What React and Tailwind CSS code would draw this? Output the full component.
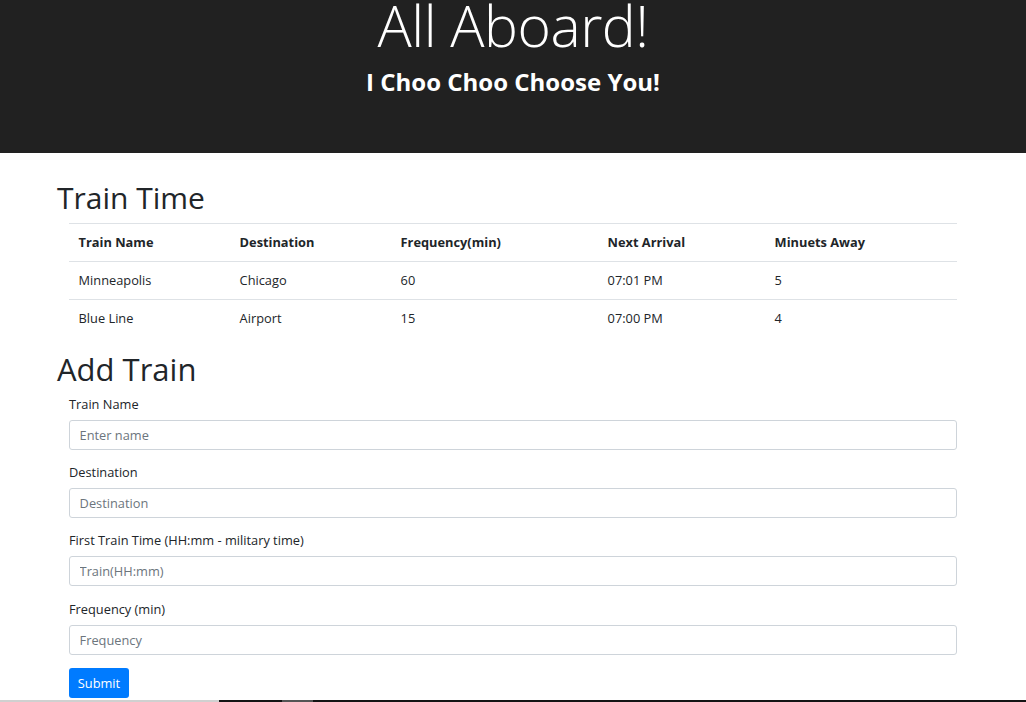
import React from 'react';

const font = { fontFamily: '"Open Sans", "Noto Sans", sans-serif' };

const trains = [
    { name: 'Minneapolis', dest: 'Chicago', freq: '60', next: '07:01 PM', away: '5' },
    { name: 'Blue Line', dest: 'Airport', freq: '15', next: '07:00 PM', away: '4' },
];

const fields = [
    { label: 'Train Name', placeholder: 'Enter name' },
    { label: 'Destination', placeholder: 'Destination' },
    { label: 'First Train Time (HH:mm - military time)', placeholder: 'Train(HH:mm)' },
    { label: 'Frequency (min)', placeholder: 'Frequency' },
];

export default function App() {
    return (
        <div className="min-h-[702px] bg-white text-[#212529]" style={font}>
            {/* Jumbotron */}
            <header className="h-[153px] bg-[#212121] text-white flex flex-col items-center overflow-hidden">
                <h1 className="text-[57px] leading-[50px] font-light tracking-[-0.5px]">All Aboard!</h1>
                <h3 className="text-[24px] leading-[24px] font-bold mt-[20px]">I Choo Choo Choose You!</h3>
            </header>

            <main className="w-[912px] mx-auto mt-[27px]">
                <h1 className="text-[30px] leading-[36px] font-medium mb-[7px]">Train Time</h1>

                <div className="px-[12px]">
                    <table className="w-full table-fixed border-collapse text-[12.8px] mb-[13px]">
                        <thead>
                            <tr className="border-t border-b border-[#dee2e6]">
                                <th className="w-[161px] h-[38px] px-[9.6px] text-left font-bold">Train Name</th>
                                <th className="w-[161px] px-[9.6px] text-left font-bold">Destination</th>
                                <th className="w-[207px] px-[9.6px] text-left font-bold">Frequency(min)</th>
                                <th className="w-[167px] px-[9.6px] text-left font-bold">Next Arrival</th>
                                <th className="px-[9.6px] text-left font-bold">Minuets Away</th>
                            </tr>
                        </thead>
                        <tbody>
                            {trains.map((t, i) => (
                                <tr key={t.name} className={i > 0 ? 'border-t border-[#dee2e6]' : ''}>
                                    <td className="h-[38px] px-[9.6px]">{t.name}</td>
                                    <td className="px-[9.6px]">{t.dest}</td>
                                    <td className="px-[9.6px]">{t.freq}</td>
                                    <td className="px-[9.6px]">{t.next}</td>
                                    <td className="px-[9.6px]">{t.away}</td>
                                </tr>
                            ))}
                        </tbody>
                    </table>
                </div>

                <h1 className="text-[31px] leading-[37px] font-medium mb-[7px]">Add Train</h1>

                <form className="px-[12px] text-[12.8px]" onSubmit={(e) => e.preventDefault()}>
                    {fields.map((f) => (
                        <div key={f.label} className="mb-[13.4px]">
                            <label className="block leading-[19px] mb-[6px]">{f.label}</label>
                            <input
                                type="text"
                                placeholder={f.placeholder}
                                className="block w-full h-[30px] px-[9.6px] border border-[#ced4da] rounded-[3px] placeholder:text-[#6c757d] outline-none"
                            />
                        </div>
                    ))}
                    <button
                        type="submit"
                        className="block mt-[1px] h-[30px] w-[60px] bg-[#007bff] text-white rounded-[3px] leading-none"
                    >
                        Submit
                    </button>
                </form>
            </main>

            <div className="flex h-[2px] mt-[2px]">
                <div className="w-[219px] bg-[#d0d0d0]" />
                <div className="w-[63px] bg-[#141414]" />
                <div className="w-[31px] bg-[#555555]" />
                <div className="flex-1 bg-[#141414]" />
            </div>
        </div>
    );
}
